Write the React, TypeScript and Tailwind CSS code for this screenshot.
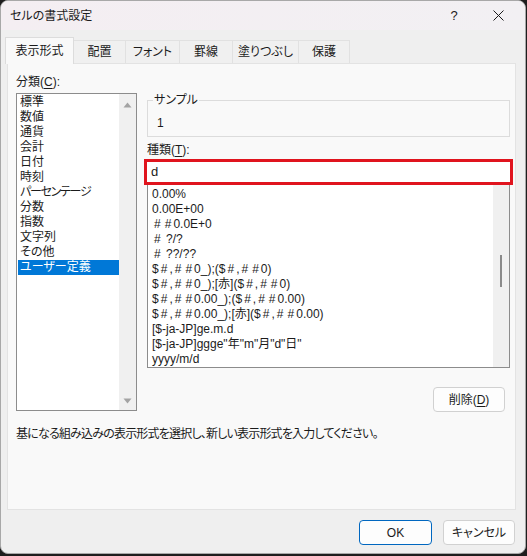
import React from "react";

const categories = [
  "標準",
  "数値",
  "通貨",
  "会計",
  "日付",
  "時刻",
  "パーセンテージ",
  "分数",
  "指数",
  "文字列",
  "その他",
  "ユーザー定義",
];

const formats = [
  "0.00%",
  "0.00E+00",
  "##0.0E+0",
  "# ?/?",
  "# ??/??",
  "$#,##0_);($#,##0)",
  "$#,##0_);[赤]($#,##0)",
  "$#,##0.00_);($#,##0.00)",
  "$#,##0.00_);[赤]($#,##0.00)",
  "[$-ja-JP]ge.m.d",
  '[$-ja-JP]ggge"年"m"月"d"日"',
  "yyyy/m/d",
];

const tabs = ["表示形式", "配置", "フォント", "罫線", "塗りつぶし", "保護"];
const tabWidths = ["w-[69px]", "w-[52px]", "w-[54px]", "w-[53px]", "w-[66px]", "w-[51px]"];

// the dialog font draws '#' much wider than Arial does
const FormatText = ({ text }: { text: string }) => (
  <>
    {text.split("#").map((part, i) => (
      <React.Fragment key={i}>
        {i > 0 && <span className="px-[2px]">#</span>}
        {part}
      </React.Fragment>
    ))}
  </>
);

const Arrow = ({ up }: { up?: boolean }) => (
  <svg width="9" height="6" viewBox="0 0 9 6">
    <path d={up ? "M0.5 5.5 L4.5 0.5 L8.5 5.5 Z" : "M0.5 0.5 L4.5 5.5 L8.5 0.5 Z"} fill="#a3a3a3" />
  </svg>
);

const Button = ({ children, primary }: { children: React.ReactNode; primary?: boolean }) => (
  <div
    className={
      "flex items-center justify-center rounded-[4px] bg-[#fdfdfd] text-[12px] " +
      (primary ? "border border-[#0067c0] w-[73px] h-[25px]" : "border border-[#d1d1d1] w-[72px] h-[25px]")
    }
  >
    {children}
  </div>
);

export default function App() {
  return (
    <div className="w-[527px] h-[556px] bg-[#1e1e1e] text-[#1b1b1b] font-['Liberation_Sans','Noto_Sans_CJK_JP',sans-serif] [font-feature-settings:'palt'] text-[12px]">
      <div className="w-[526px] h-[554px] rounded-[8px] border border-[#a8a8a8] bg-[#efefef] overflow-hidden flex flex-col">
        {/* title bar */}
        <div className="h-[29px] shrink-0 flex items-center bg-gradient-to-r from-[#f4eef2] to-[#f2f0f3]">
          <div className="pl-[9px] flex-1 text-[12px] leading-none">セルの書式設定</div>
          <div className="w-[44px] flex justify-center text-[13px] leading-none">?</div>
          <div className="w-[44px] mr-[5px] flex justify-center">
            <svg width="11" height="11" viewBox="0 0 11 11">
              <path d="M0.5 0.5 L10.5 10.5 M10.5 0.5 L0.5 10.5" stroke="#1b1b1b" strokeWidth="1" />
            </svg>
          </div>
        </div>

        {/* tabs */}
        <div className="mt-[7px] ml-[4px] h-[26px] flex items-end">
          {tabs.map((t, i) =>
            i === 0 ? (
              <div
                key={t}
                className={
                  tabWidths[i] +
                  " relative z-10 h-[27px] mb-[-1px] bg-[#f9f9f9] border border-b-0 border-[#dcdcdc] flex items-center justify-center text-[12px] pb-[1px]"
                }
              >
                {t}
              </div>
            ) : (
              <div
                key={t}
                className={
                  tabWidths[i] +
                  " h-[23px] bg-[#f0f0f0] border border-l-0 border-b-0 border-[#e1e1e1] flex items-center justify-center text-[12px]"
                }
              >
                {t}
              </div>
            )
          )}
        </div>

        {/* tab panel */}
        <div className="ml-[6px] w-[509px] h-[447px] shrink-0 bg-[#f9f9f9] border border-[#e3e3e3] pl-[8px] pt-[10px] flex flex-col">
          <div className="flex">
            {/* category column */}
            <div className="w-[121px] flex flex-col">
              <div className="h-[19px] leading-[17px]">
                分類(<span className="underline underline-offset-2">C</span>):
              </div>
              <div className="h-[318px] border border-[#8c8c8c] bg-white flex">
                <div className="flex-1 pt-[1px] pl-[1px]">
                  {categories.map((c, i) => (
                    <div
                      key={c}
                      className={
                        "h-[15px] leading-[15px] pl-[2px] whitespace-nowrap " +
                        (c === "パーセンテージ" ? "tracking-[-1.3px] " : "") +
                        (i === categories.length - 1 ? "bg-[#0078d7] text-white" : "")
                      }
                    >
                      {c}
                    </div>
                  ))}
                </div>
                <div className="w-[17px] bg-[#f0f0f0] flex flex-col items-center justify-between pt-[8px] pb-[6px]">
                  <Arrow up />
                  <Arrow />
                </div>
              </div>
            </div>

            {/* format column */}
            <div className="ml-[10px] w-[363px] flex flex-col">
              <div className="h-[19px]" />
              <div className="relative mt-[7px] h-[37px] border border-[#dcdcdc] pl-[9px] pt-[14px] leading-[16px]">
                <span className="absolute left-[5px] -top-[9px] bg-[#f9f9f9] px-[1px] leading-[16px]">サンプル</span>
                1
              </div>
              <div className="mt-[4px] h-[18px] leading-[18px]">
                種類(<span className="underline underline-offset-2">T</span>):
              </div>
              <div className="-mx-[3px] h-[26px] border-[3px] border-[#e0141e] bg-white pl-[4px] leading-[19px] text-[13px]">
                d
              </div>
              <div className="h-[183px] border border-t-0 border-[#8c8c8c] bg-white flex overflow-hidden">
                <div className="flex-1 pt-[2px] pl-[4px] [font-feature-settings:normal]">
                  {formats.map((f) => (
                    <div key={f} className="h-[15px] leading-[15px] whitespace-nowrap">
                      <FormatText text={f} />
                    </div>
                  ))}
                </div>
                <div className="w-[16px] bg-[#f0f0f0] pt-[70px] flex justify-center">
                  <div className="w-[2px] h-[32px] bg-[#8a8a8a]" />
                </div>
              </div>
              <div className="mt-[19px] mr-[5px] self-end">
                <Button>
                  削除(<span className="underline underline-offset-2">D</span>)
                </Button>
              </div>
            </div>
          </div>

          <div className="mt-[14px] leading-[16px] tracking-[-0.8px]">
            基になる組み込みの表示形式を選択し、新しい表示形式を入力してください。
          </div>
        </div>

        {/* footer buttons */}
        <div className="mt-[10px] pr-[10px] flex justify-end gap-[11px]">
          <Button primary>OK</Button>
          <Button>キャンセル</Button>
        </div>
      </div>
    </div>
  );
}
